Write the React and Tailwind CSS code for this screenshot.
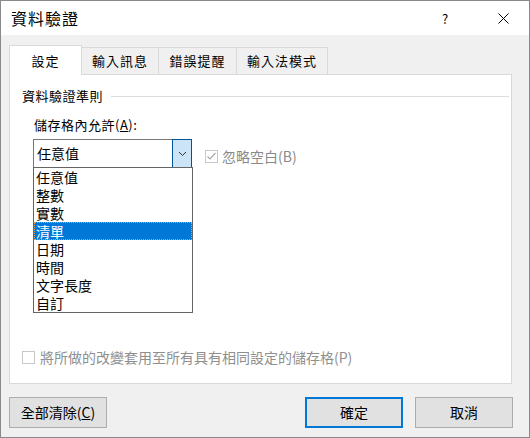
import React from "react";

const font = { fontFamily: '"Noto Sans CJK TC", "Noto Sans", sans-serif' };

const tabs = ["設定", "輸入訊息", "錯誤提醒", "輸入法模式"];
const tabWidths = ["w-[73px]", "w-[77px]", "w-[78px]", "w-[91px]"];
const options = ["任意值", "整數", "實數", "清單", "日期", "時間", "文字長度", "自訂"];

function CheckBox({ checked }) {
  return (
    <div className="h-[13px] w-[13px] shrink-0 border border-[#c8c8c8] bg-white flex items-center justify-center">
      {checked && (
        <svg width="11" height="11" viewBox="0 0 11 11">
          <polyline points="1.5,5.5 4,8 9.5,2" fill="none" stroke="#a8a8a8" strokeWidth="1.2" />
        </svg>
      )}
    </div>
  );
}

function Button({ children, primary }) {
  return (
    <div
      className={
        "h-[31px] w-[98px] flex items-center justify-center bg-[#e1e1e1] text-[14px] text-black " +
        (primary ? "border-2 border-[#0078d7]" : "border border-[#adadad]")
      }
    >
      {children}
    </div>
  );
}

export default function App() {
  return (
    <div
      className="w-[530px] h-[438px] flex flex-col border border-[#8a8a8a] bg-[#f0f0f0] text-black overflow-hidden"
      style={font}
    >
      {/* title bar */}
      <div className="h-[34px] shrink-0 bg-white flex items-center pl-[10px]">
        <div className="text-[16px] tracking-[1px] leading-none">資料驗證</div>
        <div className="ml-auto w-[20px] text-[13px] leading-none text-center">?</div>
        <div className="ml-[38px] mr-[16px] w-[20px] flex justify-center">
          <svg width="11" height="11" viewBox="0 0 11 11">
            <path d="M0.5 0.5 L10.5 10.5 M10.5 0.5 L0.5 10.5" stroke="#000" strokeWidth="1" />
          </svg>
        </div>
      </div>

      <div className="flex-1 flex flex-col px-[8px] pt-[10px]">
        {/* tabs */}
        <div className="flex items-end h-[30px] relative z-10">
          {tabs.map((t, i) =>
            i === 0 ? (
              <div
                key={t}
                className={`${tabWidths[i]} h-[30px] bg-white border border-[#d9d9d9] border-b-0 flex items-center justify-center text-[13px] tracking-[1px]`}
              >
                {t}
              </div>
            ) : (
              <div
                key={t}
                className={`${tabWidths[i]} h-[27px] mb-px bg-[#f0f0f0] border border-[#d9d9d9] border-l-0 border-b-0 flex items-center justify-center text-[13px] tracking-[1px]`}
              >
                {t}
              </div>
            )
          )}
        </div>

        {/* panel */}
        <div className="-mt-px h-[310px] w-[503px] bg-white border border-[#d9d9d9] flex flex-col">
          <div className="flex items-center pt-[12px] pl-[12px] pr-[2px]">
            <span className="text-[13px] leading-[18px] tracking-[0.5px]">資料驗證準則</span>
            <div className="flex-1 ml-[8px] h-px bg-[#dcdcdc]" />
          </div>

          <div className="pl-[24px] mt-[11px] text-[13px] leading-[18px] tracking-[0.5px]">
            儲存格內允許(<span className="underline">A</span>):
          </div>

          <div className="flex items-start pl-[23px] mt-[5px]">
            <div className="relative">
              <div className="w-[159px] h-[29px] border border-[#7a7a7a] bg-white flex">
                <div className="flex-1 flex items-center pl-[3px] text-[14px]">任意值</div>
                <div className="w-[20px] -my-px -mr-px border border-[#005499] bg-[#cce4f7] flex items-center justify-center">
                  <svg width="9" height="6" viewBox="0 0 9 6">
                    <polyline points="1,1 4.5,4.5 8,1" fill="none" stroke="#333" strokeWidth="1" />
                  </svg>
                </div>
              </div>
              {/* dropdown list */}
              <div className="absolute left-0 top-[28px] w-[160px] border border-[#646464] bg-white z-20">
                {options.map((o) => (
                  <div
                    key={o}
                    className={
                      "h-[18px] flex items-center pl-[2px] text-[14px] leading-none " +
                      (o === "清單"
                        ? "bg-[#0078d7] text-white outline outline-1 outline-dotted outline-[#e8a040] -outline-offset-1"
                        : "")
                    }
                  >
                    {o}
                  </div>
                ))}
              </div>
            </div>
            <div className="flex items-center ml-[13px] mt-[7px] gap-[4px] text-[14px] text-[#8a8a8a]">
              <CheckBox checked />
              <span>忽略空白(B)</span>
            </div>
          </div>

          <div className="mt-auto mb-[15px] pl-[12px] flex items-center gap-[5px] text-[14px] text-[#8f8f8f]">
            <CheckBox />
            <span>將所做的改變套用至所有具有相同設定的儲存格(P)</span>
          </div>
        </div>

        {/* buttons */}
        <div className="flex items-center mt-[13px] w-[504px]">
          <Button>
            全部清除(<span className="underline">C</span>)
          </Button>
          <div className="ml-auto">
            <Button primary>確定</Button>
          </div>
          <div className="ml-[12px]">
            <Button>取消</Button>
          </div>
        </div>
      </div>
    </div>
  );
}
